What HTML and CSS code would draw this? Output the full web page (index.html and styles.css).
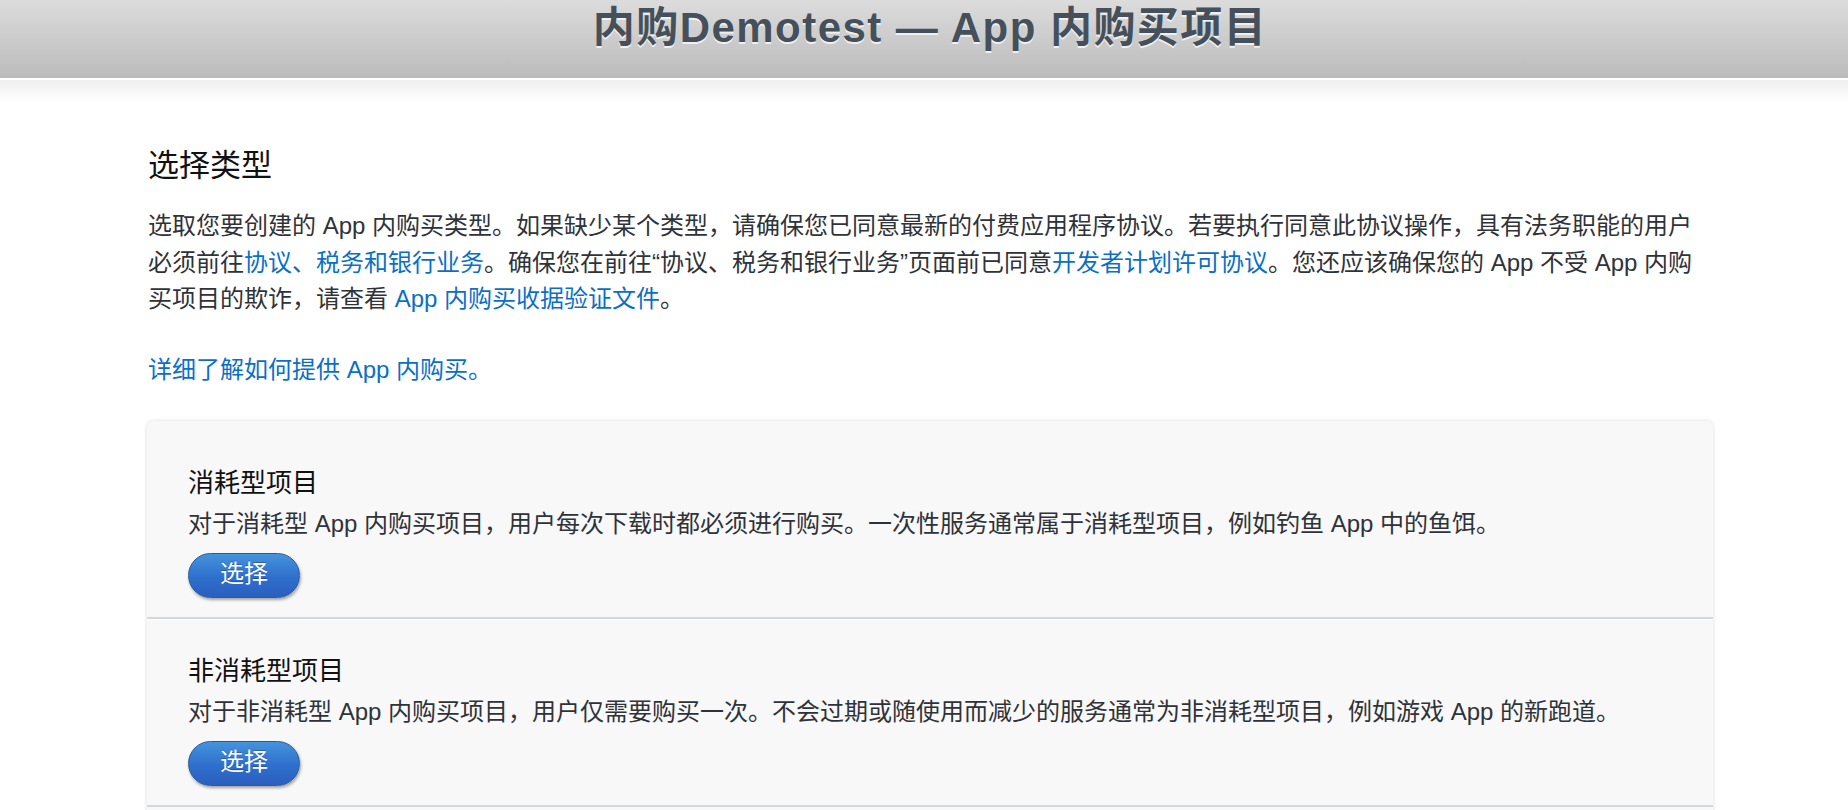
FILE: index.html
```html
<!DOCTYPE html>
<html lang="zh-CN">
<head>
<meta charset="utf-8">
<title>内购Demotest — App 内购买项目</title>
<link rel="stylesheet" href="styles.css">
</head>
<body>
<header class="topbar">
  <h1 class="topbar-title">内购Demotest — App 内购买项目</h1>
</header>
<div class="topbar-shade"></div>
<main class="content">
  <h2 class="section-title">选择类型</h2>
  <p class="intro">选取您要创建的 App 内购买类型。如果缺少某个类型，请确保您已同意最新的付费应用程序协议。若要执行同意此协议操作，具有法务职能的用户<br>必须前往<a href="#" class="link">协议、税务和银行业务</a>。确保您在前往“协议、税务和银行业务”页面前已同意<a href="#" class="link">开发者计划许可协议</a>。您还应该确保您的 App 不受 App 内购买项目的欺诈，请查看 <a href="#" class="link">App 内购买收据验证文件</a>。</p>
  <p class="learn"><a href="#" class="link">详细了解如何提供 App 内购买。</a></p>
  <section class="types">
    <div class="type-item">
      <h3 class="type-title">消耗型项目</h3>
      <p class="type-desc">对于消耗型 App 内购买项目，用户每次下载时都必须进行购买。一次性服务通常属于消耗型项目，例如钓鱼 App 中的鱼饵。</p>
      <button class="select-btn">选择</button>
    </div>
    <div class="type-item">
      <h3 class="type-title">非消耗型项目</h3>
      <p class="type-desc">对于非消耗型 App 内购买项目，用户仅需要购买一次。不会过期或随使用而减少的服务通常为非消耗型项目，例如游戏 App 的新跑道。</p>
      <button class="select-btn">选择</button>
    </div>
  </section>
</main>
</body>
</html>
```

FILE: styles.css
```css
html, body {
  height: 810px;
  overflow: hidden;
}
body {
  margin: 0;
  background: #ffffff;
  font-family: "Liberation Sans", "Noto Sans CJK SC", sans-serif;
  color: #333333;
}
.topbar {
  height: 78px;
  background: linear-gradient(to bottom, #dcdcdc 0%, #bbbbbb 100%);
  box-sizing: border-box;
  padding: 3px 0 0 12px;
}
.topbar-title {
  margin: 0;
  text-align: center;
  font-size: 42px;
  line-height: 50px;
  font-weight: bold;
  letter-spacing: 1.45px;
  color: #45505a;
  text-shadow: 0 2px 0 #f0f0f0;
}
.topbar-shade {
  height: 22px;
  border-top: 2px solid #ffffff;
  background: linear-gradient(to bottom, #efefef 0%, #ffffff 100%);
}
.content {
  width: 1566px;
  margin: 0 0 0 147px;
  padding-top: 46px;
}
.section-title {
  margin: 0 0 0 1px;
  font-size: 31px;
  line-height: 36px;
  font-weight: normal;
  color: #111111;
}
.intro {
  margin: 24px 0 0 1px;
  font-size: 24px;
  line-height: 36.5px;
  color: #2f3338;
}
.learn {
  margin: 34px 0 0 1px;
  font-size: 24px;
  line-height: 36px;
}
.link {
  color: #0a6fc6;
  text-decoration: none;
}
.types {
  margin-top: 33px;
  background: #f8f8f8;
  border-radius: 6px;
  box-shadow: 0 0 4px rgba(0, 0, 0, 0.14);
  padding: 11px 0 60px;
}
.type-item {
  padding: 36px 40px 19px 41px;
  border-bottom: 2px solid #d5d8db;
}
.type-item + .type-item {
  border-top: 1px solid #ffffff;
}
.type-title {
  margin: 0 0 8px;
  font-size: 26px;
  line-height: 30px;
  font-weight: normal;
  color: #111111;
}
.type-desc {
  margin: 0;
  font-size: 24px;
  line-height: 36px;
  color: #2f3338;
}
.select-btn {
  display: block;
  margin-top: 11px;
  width: 112px;
  height: 45px;
  border-radius: 23px;
  border: 1px solid #2a5d96;
  background: linear-gradient(to bottom, #4493dd 0%, #2f6fcc 55%, #2a5fbe 100%);
  box-shadow: 1px 2px 3px rgba(0, 0, 0, 0.35);
  color: #ffffff;
  font-family: "Liberation Sans", "Noto Sans CJK SC", sans-serif;
  font-size: 24px;
  line-height: 1;
  padding: 0 0 2px;
  text-shadow: 0 -1px 0 rgba(0, 0, 0, 0.25);
  cursor: pointer;
}
```
